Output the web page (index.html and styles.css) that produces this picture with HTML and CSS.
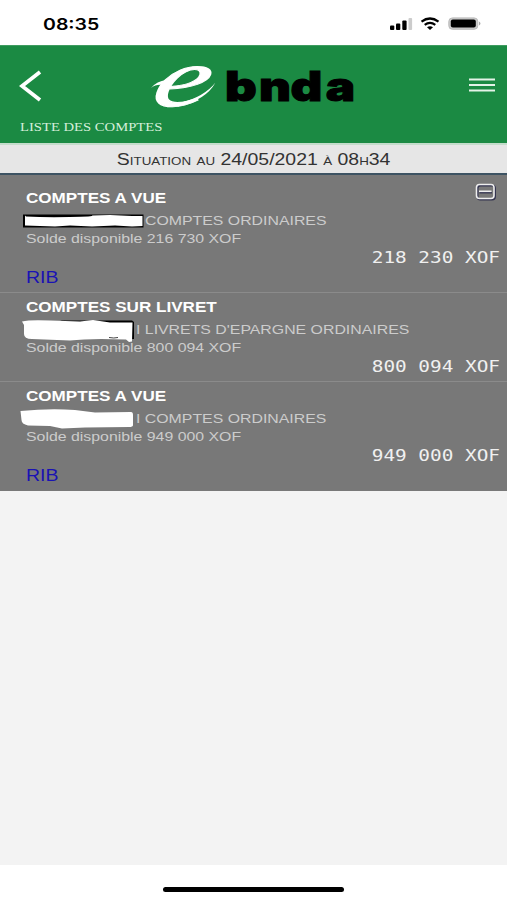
FILE: index.html
```html
<!DOCTYPE html>
<html lang="fr">
<head>
    <meta charset="UTF-8">
    <meta name="viewport" content="width=device-width, initial-scale=1.0">
    <title>e-bnda - Liste des comptes</title>
    <link rel="stylesheet" href="styles.css">
</head>
<body>
    <div class="status-bar">
        <span class="clock wide">08:35</span>
        <svg class="status-icons" width="92" height="16" viewBox="0 0 92 16">
            <rect x="0" y="9.5" width="4.3" height="4.5" rx="1"/>
            <rect x="6" y="7.5" width="4.3" height="6.5" rx="1"/>
            <rect x="12.3" y="4.5" width="4.3" height="9.5" rx="1"/>
            <rect x="18.5" y="2" width="3.6" height="12" rx="1" fill="#ccc"/>
            <g fill="none" stroke="#000" stroke-width="2.2">
                <path d="M31.5 5.7 Q40 -0.7 48.5 5.7"/>
                <path d="M34.7 8.9 Q40 4.9 45.3 8.9"/>
            </g>
            <path d="M37 11.2 Q40 9.1 43 11.2 L40 13.9 Z"/>
            <rect x="58.8" y="1.9" width="29" height="11.4" rx="3.6" fill="#c9c9c9" stroke="#bbb" stroke-width="1"/>
            <rect x="60.8" y="3.6" width="25" height="8" rx="2"/>
            <path d="M89 5.5 Q92 7.5 89 9.5 Z" fill="#aaa"/>
        </svg>
    </div>

    <header>
        <div class="header-row">
            <svg class="back" width="24" height="32" viewBox="0 0 24 32">
                <path d="M21 2 L3 16 L21 30" fill="none" stroke="#fff" stroke-width="3.8"/>
            </svg>
            <svg class="logo" width="210" height="64" viewBox="0 0 210 64">
                <text class="logo-e" transform="translate(-1 51) skewX(-18) scale(1.45 1)">e</text>
                <path d="M30 48 Q54 42 65.5 27.5 Q56 45 28 51.5 Z" fill="#fff"/>
                <path d="M1 33 Q7 26 16 25 L13 30 Q6 29 1 33 Z" fill="#fff"/>
                <text class="logo-name" transform="translate(75 46) scale(1.2 1)" x="0 28.3 54.5 84">bnda</text>
            </svg>
            <svg class="menu" width="26" height="14" viewBox="0 0 26 14">
                <path d="M0 1.5 H26 M0 7 H26 M0 12.5 H26" stroke="#e4f3e8" stroke-width="2.2"/>
            </svg>
        </div>
        <div class="page-name"><span class="wide">LISTE DES COMPTES</span></div>
    </header>

    <div class="situation"><span>Situation au 24/05/2021 à 08h34</span></div>

    <main>
        <section class="account first">
            <svg class="collapse" width="22" height="18" viewBox="0 0 22 18">
                <rect x="2.5" y="2.5" width="17.5" height="14" rx="3" fill="none" stroke="#33334f" stroke-width="2"/>
                <rect x="1.5" y="1.5" width="17.5" height="14" rx="3" fill="none" stroke="#eee" stroke-width="1.6"/>
                <path d="M4.5 9.7 H17" stroke="#33334f" stroke-width="1.5"/>
                <path d="M4 8.3 H16.5" stroke="#eee" stroke-width="1.6"/>
            </svg>
            <h2><span class="wide">COMPTES A VUE</span></h2>
            <div class="label">
                <svg class="mask" width="125" height="22" viewBox="0 0 125 22">
                    <rect x="3" y="4.5" width="120.5" height="13"/>
                    <path d="M5 5.5 L6 6.5 Q25 7.5 50 7 T72 5.5 L90 5 L112 6 L122.5 6 V16 L112 16.5 L95 15.5 L72 16.5 L50 15.5 L35 16.5 L5 15.5 Z" fill="#fff"/>
                </svg>
                <span class="wide">COMPTES ORDINAIRES</span>
            </div>
            <p class="balance"><span class="wide">Solde disponible 216 730 XOF</span></p>
            <p class="amount"><span class="wide">218 230 XOF</span></p>
            <a class="rib" href="#"><span class="wide">RIB</span></a>
        </section>

        <section class="account">
            <h2><span class="wide">COMPTES SUR LIVRET</span></h2>
            <div class="label">
                <svg class="mask" width="116" height="22" viewBox="0 0 116 22">
                    <path d="M40 1.5 L112 1.5 L114 3 V20 H110 Z"/>
                    <path d="M2 2.5 Q10 0.5 30 1.5 L60 2.5 L73 1 L90 3.5 L112.5 3.5 L112 22.5 L109 23 L106 20.5 Q70 19 50 21.5 L12 20 Q4 20 4 15 L4 6 Z" fill="#fff"/>
                    <path d="M89 18.5 Q94 19.5 98 18.5" fill="none" stroke="#444"/>
                </svg>
                <span class="wide">I LIVRETS D'EPARGNE ORDINAIRES</span>
            </div>
            <p class="balance"><span class="wide">Solde disponible 800 094 XOF</span></p>
            <p class="amount"><span class="wide">800 094 XOF</span></p>
        </section>

        <section class="account last">
            <h2><span class="wide">COMPTES A VUE</span></h2>
            <div class="label">
                <svg class="mask" width="116" height="22" viewBox="0 0 116 22">
                    <path d="M0.5 3 Q30 0 55 2 L75 4.5 L111 4 Q113 4 113 7 V17 Q113 19 109 19 L65 19.5 L42 20.5 L30 18 L8 17.5 Q1.5 16 1.5 12 Z" fill="#fff"/>
                </svg>
                <span class="wide">I COMPTES ORDINAIRES</span>
            </div>
            <p class="balance"><span class="wide">Solde disponible 949 000 XOF</span></p>
            <p class="amount"><span class="wide">949 000 XOF</span></p>
            <a class="rib" href="#"><span class="wide">RIB</span></a>
        </section>
    </main>

    <footer><div class="home-bar"></div></footer>
</body>
</html>
```
FILE: styles.css
```css
* {
    box-sizing: border-box;
}
body {
    margin: 0;
    height: 900px;
    display: flex;
    flex-direction: column;
    background-color: #f3f3f3;
    font-family: "Liberation Sans", Arial, sans-serif;
}
h2, p {
    margin: 0;
}
.wide {
    display: inline-block;
    transform: scaleX(1.22);
    transform-origin: left center;
    white-space: pre;
}

/* status bar */
.status-bar {
    height: 45px;
    display: flex;
    align-items: center;
    justify-content: space-between;
    padding: 2px 25px 0 43px;
    background-color: #fff;
}
.clock {
    font-family: Inter, sans-serif;
    font-size: 16px;
    font-weight: 600;
}

/* header */
header {
    height: 98px;
    background-color: #1b8a43;
    border-top: 1px solid #3f9c60;
}
.header-row {
    height: 71px;
    display: flex;
    align-items: center;
    padding: 10px 12px 0 19px;
}
.back {
    margin-bottom: 1px;
}
.logo {
    margin-left: 107px;
    overflow: visible;
}
.logo-e {
    font-family: "Liberation Serif", serif;
    font-style: italic;
    font-size: 84px;
    fill: #fff;
    stroke: #fff;
    stroke-width: 1px;
}
.logo-name {
    font-family: Inter, sans-serif;
    font-weight: 900;
    font-size: 41px;
    fill: #000;
    stroke: #000;
    stroke-width: 1px;
}
.menu {
    margin-left: auto;
    margin-bottom: 3px;
}
.page-name {
    padding-left: 20px;
    font-family: "Liberation Serif", serif;
    font-size: 12px;
    line-height: 21px;
    color: #d5efdb;
}

.situation {
    height: 32px;
    border-top: 2px solid #c4dccb;
    border-bottom: 2px solid #3d5363;
    background-color: #e6e6e6;
    color: #333;
    font-size: 16px;
    line-height: 30px;
    text-align: center;
    font-variant: small-caps;
}
.situation span {
    display: inline-block;
    transform: scaleX(1.215);
}

/* accounts */
.account {
    position: relative;
    padding: 3px 7px 4px 26px;
    background-color: #787878;
    border-top: 1px solid #8b8b8b;
}
.account.first {
    border-top: none;
    padding-top: 12px;
}
.account.last {
    padding-bottom: 5px;
}
.collapse {
    position: absolute;
    top: 8px;
    right: 10px;
}
.account h2 {
    height: 23px;
    font-size: 14px;
    line-height: 22px;
    color: #fff;
}
.label {
    display: flex;
    height: 22px;
    margin-left: -6px;
    font-size: 13px;
    line-height: 22px;
    color: #ccc;
}
.mask {
    position: relative;
    overflow: visible;
    z-index: 1;
}
.balance {
    height: 15px;
    font-size: 13px;
    line-height: 13px;
    color: #ccc;
}
.amount {
    font-family: "DejaVu Sans Mono", monospace;
    font-size: 16px;
    line-height: 21px;
    text-align: right;
    color: #f0f0f0;
}
.amount .wide {
    transform: scaleX(1.21);
    transform-origin: right center;
}
.rib {
    display: block;
    font-size: 16px;
    line-height: 20px;
    color: #1a12b4;
    text-decoration: none;
}

footer {
    margin-top: auto;
    height: 35px;
    padding-top: 22px;
    background-color: #fff;
}
.home-bar {
    width: 181px;
    height: 5px;
    margin: 0 auto;
    border-radius: 3px;
    background-color: #000;
}
```
